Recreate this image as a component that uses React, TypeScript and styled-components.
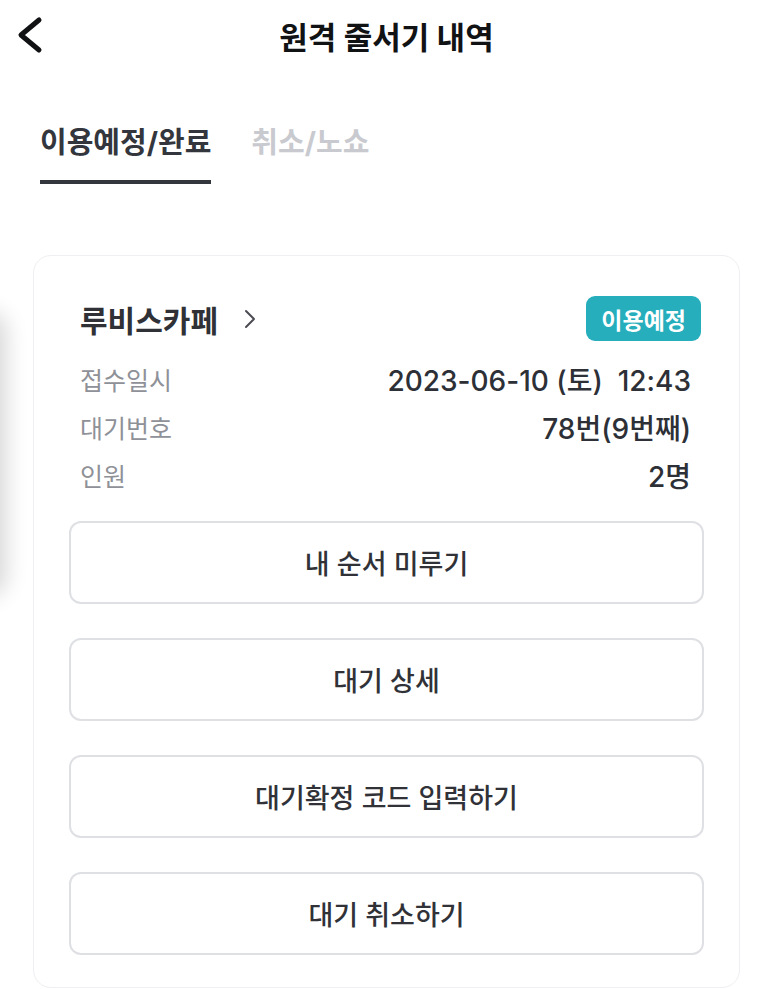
import styled, { createGlobalStyle } from "styled-components";

const GlobalStyle = createGlobalStyle`
  html, body {
    margin: 0;
    padding: 0;
    background: #ffffff;
  }
  body {
    font-family: "Inter", "Noto Sans CJK KR", "Noto Sans", sans-serif;
    color: #2f3136;
  }
  * {
    box-sizing: border-box;
  }
`;

const Page = styled.div`
  position: relative;
  width: 773px;
  min-height: 989px;
  overflow: hidden;
`;

/* gesture shadow peeking in from the left edge */
const EdgeShadow = styled.div`
  position: absolute;
  left: -24px;
  top: 318px;
  width: 24px;
  height: 272px;
  border-radius: 12px;
  box-shadow: 0 0 22px 6px rgba(0, 0, 0, 0.16);
`;

const Header = styled.header`
  display: grid;
  grid-template-columns: 60px 1fr 60px;
  align-items: center;
  height: 70px;
`;

const BackButton = styled.button`
  display: flex;
  align-items: center;
  justify-content: flex-start;
  padding: 0 0 0 16px;
  border: none;
  background: none;
  cursor: pointer;
`;

const Title = styled.h1`
  margin: 0;
  text-align: center;
  font-size: 31px;
  font-weight: 700;
  color: #111214;
`;

const Tabs = styled.nav`
  display: flex;
  gap: 40px;
  padding: 55px 40px 0;
`;

const Tab = styled.div<{ $active?: boolean }>`
  font-size: 29px;
  font-weight: 700;
  line-height: 36px;
  padding-bottom: 19px;
  color: ${(p) => (p.$active ? "#33363d" : "#c9cacf")};
  border-bottom: 4px solid ${(p) => (p.$active ? "#33363d" : "transparent")};
`;

const Card = styled.section`
  margin: 71px 33px 0;
  padding: 40px 35px 32px;
  border: 1px solid #eeeff2;
  border-radius: 18px;
  background: #ffffff;
`;

const CardHeader = styled.div`
  display: flex;
  align-items: center;
  justify-content: space-between;
  padding: 0 3px 0 11px;
  height: 45px;
`;

const StoreLink = styled.a`
  display: flex;
  align-items: center;
  gap: 26px;
  font-size: 30px;
  font-weight: 600;
  color: #2f3136;
  text-decoration: none;
`;

const Badge = styled.span`
  display: inline-flex;
  align-items: center;
  height: 45px;
  padding: 0 15px;
  border-radius: 9px;
  background: #27aebd;
  color: #ffffff;
  font-size: 23px;
  font-weight: 700;
`;

const InfoList = styled.dl`
  margin: 14px 0 22px;
  padding: 0 13px 0 11px;
`;

const InfoRow = styled.div`
  display: flex;
  align-items: center;
  justify-content: space-between;
  height: 48px;
`;

const Label = styled.dt`
  font-size: 25px;
  font-weight: 400;
  color: #8f9198;
`;

const Value = styled.dd`
  margin: 0;
  font-size: 28px;
  font-weight: 500;
  color: #2d3036;
  white-space: pre;
`;

const Actions = styled.div`
  display: flex;
  flex-direction: column;
  gap: 34px;
`;

const ActionButton = styled.button`
  height: 83px;
  width: 100%;
  border: 2px solid #dfe0e4;
  border-radius: 12px;
  background: #ffffff;
  font-family: inherit;
  font-size: 27px;
  font-weight: 500;
  color: #303238;
  cursor: pointer;
`;

const info = [
  { label: "접수일시", value: "2023-06-10 (토)  12:43" },
  { label: "대기번호", value: "78번(9번째)" },
  { label: "인원", value: "2명" },
];

const actions = ["내 순서 미루기", "대기 상세", "대기확정 코드 입력하기", "대기 취소하기"];

export default function App() {
  return (
    <Page>
      <GlobalStyle />
      <EdgeShadow />
      <Header>
        <BackButton aria-label="뒤로">
          <svg width="28" height="38" viewBox="0 0 28 38" fill="none">
            <polyline
              points="23,4 5,19 23,34"
              stroke="#111214"
              strokeWidth="5"
              strokeLinecap="round"
              strokeLinejoin="round"
            />
          </svg>
        </BackButton>
        <Title>원격 줄서기 내역</Title>
        <div />
      </Header>

      <Tabs>
        <Tab $active>이용예정/완료</Tab>
        <Tab>취소/노쇼</Tab>
      </Tabs>

      <Card>
        <CardHeader>
          <StoreLink href="#">
            루비스카페
            <svg width="12" height="20" viewBox="0 0 12 20" fill="none">
              <polyline
                points="2,2 10,10 2,18"
                stroke="#4a4c52"
                strokeWidth="2"
                strokeLinecap="round"
                strokeLinejoin="round"
              />
            </svg>
          </StoreLink>
          <Badge>이용예정</Badge>
        </CardHeader>

        <InfoList>
          {info.map((row) => (
            <InfoRow key={row.label}>
              <Label>{row.label}</Label>
              <Value>{row.value}</Value>
            </InfoRow>
          ))}
        </InfoList>

        <Actions>
          {actions.map((text) => (
            <ActionButton key={text}>{text}</ActionButton>
          ))}
        </Actions>
      </Card>
    </Page>
  );
}
